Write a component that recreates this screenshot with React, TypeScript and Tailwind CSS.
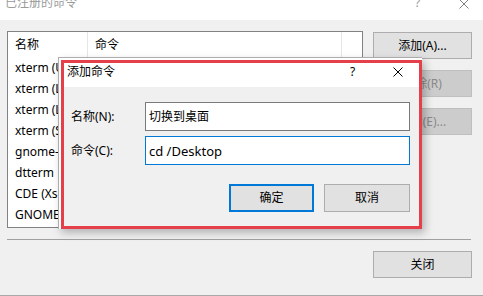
import React from "react";

const font = { fontFamily: '"Noto Sans", "Noto Sans CJK SC", sans-serif' };

const rows: { name: string; cmd: string }[] = [
  { name: "xterm (UTF-8)", cmd: "xterm -ls -u8" },
  { name: "xterm (Linux)", cmd: "xterm -ls" },
  { name: "xterm (Linux 64)", cmd: "xterm -ls" },
  { name: "xterm (Solaris)", cmd: "xterm -ls" },
  { name: "gnome-terminal", cmd: "gnome-terminal" },
  { name: "dtterm", cmd: "dtterm" },
  { name: "CDE (Xsession)", cmd: "Xsession" },
  { name: "GNOME", cmd: "gnome-session" },
];

function CloseGlyph({ className }: { className?: string }) {
  return (
    <svg viewBox="0 0 10 10" className={className} fill="none" stroke="#000" strokeWidth="1">
      <path d="M0.5 0.5 L9.5 9.5 M9.5 0.5 L0.5 9.5" />
    </svg>
  );
}

function WinButton({
  children,
  disabled,
  primary,
  className = "",
}: {
  children: React.ReactNode;
  disabled?: boolean;
  primary?: boolean;
  className?: string;
}) {
  const look = disabled
    ? "bg-[#cccccc] border border-[#bfbfbf] text-[#8a8a8a]"
    : primary
    ? "bg-[#e1e1e1] border-2 border-[#0078d7] text-black"
    : "bg-[#e1e1e1] border border-[#adadad] text-black";
  return (
    <div className={`flex items-center justify-center text-[12px] leading-none ${look} ${className}`}>
      {children}
    </div>
  );
}

export default function App() {
  return (
    <div className="relative w-[483px] h-[296px] overflow-hidden bg-[#f0f0f0]" style={font}>
      {/* title bar of the main window, clipped at the top */}
      <div className="relative h-[20px] bg-white overflow-hidden">
        <div className="relative -top-[5px] pl-[5px] text-[12px] leading-[16px] text-[#9a9a9a]">已注册的命令</div>
        <div className="absolute left-[415px] -top-[5px] text-[12px] leading-[16px] text-[#9a9a9a]">?</div>
        <CloseGlyph className="absolute left-[459px] -top-[1px] w-[10px] h-[10px] opacity-50" />
      </div>

      {/* body */}
      <div className="px-[7px] pt-[11px]">
        <div className="flex">
          <div className="w-[356px] h-[197px] border border-[#828282] bg-white overflow-hidden text-[12px] leading-[16px] text-black">
            <div className="flex h-[25px] items-center">
              <div className="w-[80px] h-full flex items-center pl-[7px] border-r border-[#e5e5e5]">名称</div>
              <div className="w-[254px] h-full flex items-center pl-[7px] border-r border-[#e5e5e5]">命令</div>
            </div>
            {rows.map((r, i) => (
              <div key={i} className="flex h-[21px] items-center">
                <div className="w-[81px] pl-[7px] whitespace-nowrap overflow-hidden">{r.name}</div>
                <div className="pl-[7px] whitespace-nowrap">{r.cmd}</div>
              </div>
            ))}
          </div>
          <div className="ml-[10px] w-[99px] pt-[1px] flex flex-col gap-[11px]">
            <WinButton className="h-[27px]">添加(A)...</WinButton>
            <WinButton className="h-[27px]" disabled>删除(R)</WinButton>
            <WinButton className="h-[27px]" disabled>编辑(E)...</WinButton>
          </div>
        </div>
        <div className="mt-[11px] mr-[5px] h-px bg-[#a0a0a0]" />
        <div className="mt-[11px] flex justify-end pr-[4px]">
          <WinButton className="w-[99px] h-[27px]">关闭</WinButton>
        </div>
      </div>
      <div className="absolute left-0 right-0 top-[295px] h-px bg-[#a8a8a8]" />

      {/* add command dialog, highlighted with a red box */}
      <div className="absolute left-[58px] top-[57px] border-l border-t border-[#adadad] bg-white pl-[2px] pt-[2px] shadow-[3px_4px_8px_rgba(0,0,0,0.25)]">
        <div className="w-[361px] h-[169px] border-[3px] border-[#e5404a] flex flex-col">
          <div className="relative h-[24px] bg-white pl-[3px] pt-[1px] text-[12px] leading-[16px] text-black">
            添加命令
            <div className="absolute left-[286px] top-[1px] text-[12px] leading-[16px]">?</div>
            <CloseGlyph className="absolute left-[329px] top-[4px] w-[10px] h-[10px]" />
          </div>
          <div className="flex-1 bg-[#f0f0f0] text-[12px] text-black">
            <div className="pt-[15px] pl-[7px] pr-[9px] flex flex-col gap-[5px]">
              <div className="flex items-center">
                <div className="w-[74px] leading-[16px]">名称(N):</div>
                <div className="flex-1 h-[29px] bg-white border border-[#7a7a7a] flex items-center pl-[3px] leading-[16px]">
                  切换到桌面
                </div>
              </div>
              <div className="flex items-center">
                <div className="w-[74px] leading-[16px]">命令(C):</div>
                <div className="flex-1 h-[29px] bg-white border border-[#0078d7] flex items-center pl-[3px] leading-[16px] text-[13px]">
                  cd /Desktop
                </div>
              </div>
            </div>
            <div className="mt-[19px] pr-[9px] flex justify-end gap-[10px]">
              <WinButton primary className="w-[85px] h-[28px]">确定</WinButton>
              <WinButton className="w-[86px] h-[28px]">取消</WinButton>
            </div>
          </div>
        </div>
      </div>
    </div>
  );
}
